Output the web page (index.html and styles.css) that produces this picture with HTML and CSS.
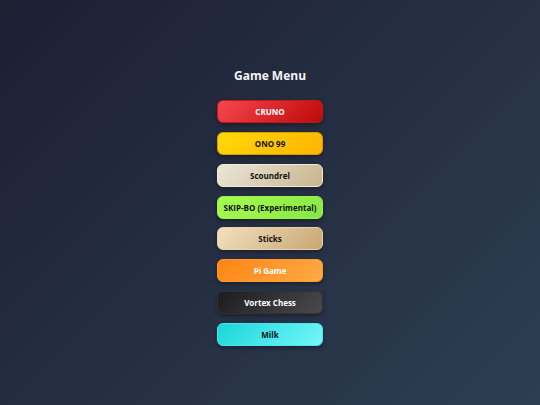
FILE: index.html
```html
<!DOCTYPE html>
<html>
<head>
<meta charset="utf-8">
<link rel="stylesheet" href="styles.css">
</head>
<body>
<div class="menu">
  <h1 class="title">Game Menu</h1>
  <button class="btn cruno">CRUNO</button>
  <button class="btn ono">ONO 99</button>
  <button class="btn scoundrel">Scoundrel</button>
  <button class="btn skipbo">SKIP-BO (Experimental)</button>
  <button class="btn sticks">Sticks</button>
  <button class="btn pi">Pi Game</button>
  <button class="btn vortex">Vortex Chess</button>
  <button class="btn milk">Milk</button>
</div>
</body>
</html>
```
FILE: styles.css
```css
html, body {
  margin: 0;
  padding: 0;
  height: 100%;
}
body {
  background: linear-gradient(135deg, #1d1f33 0%, #2d3e52 100%);
  font-family: "Open Sans", "Noto Sans", sans-serif;
}
.menu {
  display: flex;
  flex-direction: column;
  align-items: center;
  padding-top: 67px;
  gap: 8.75px;
}
.title {
  margin: 0 0 7.5px 0;
  color: #f2f4f7;
  font-size: 12px;
  font-weight: 700;
  line-height: 17px;
}
.btn {
  width: 106px;
  height: 23px;
  border-radius: 6px;
  border: 1px solid transparent;
  font-family: "Open Sans", "Noto Sans", sans-serif;
  font-size: 8px;
  font-weight: 700;
  padding: 0;
  box-shadow: 0 2px 4px rgba(0,0,0,0.35);
  color: #111;
}
.cruno { background: linear-gradient(135deg, #f7474f, #bd0a0a); color: #fff; border-color: #c81515; }
.ono { background: linear-gradient(135deg, #ffd909, #ffb300); border-color: #d99a00; }
.scoundrel { background: linear-gradient(135deg, #ebe6da, #c8b48c); border-color: #f2ead8; }
.skipbo { background: linear-gradient(135deg, #a8fb4f, #86e845); border-color: #9bf04a; }
.sticks { background: linear-gradient(135deg, #f3e0bf, #c8a772); border-color: #e7d3ae; }
.pi { background: linear-gradient(135deg, #ff8512, #ffaa45); color: #fff; border-color: #ff9a30; }
.vortex { background: linear-gradient(135deg, #1c1c1e, #4a4a4c); color: #fff; border-color: #333; }
.milk { background: linear-gradient(135deg, #1ad6da, #75f7f9); border-color: #4ae6ea; }
```
